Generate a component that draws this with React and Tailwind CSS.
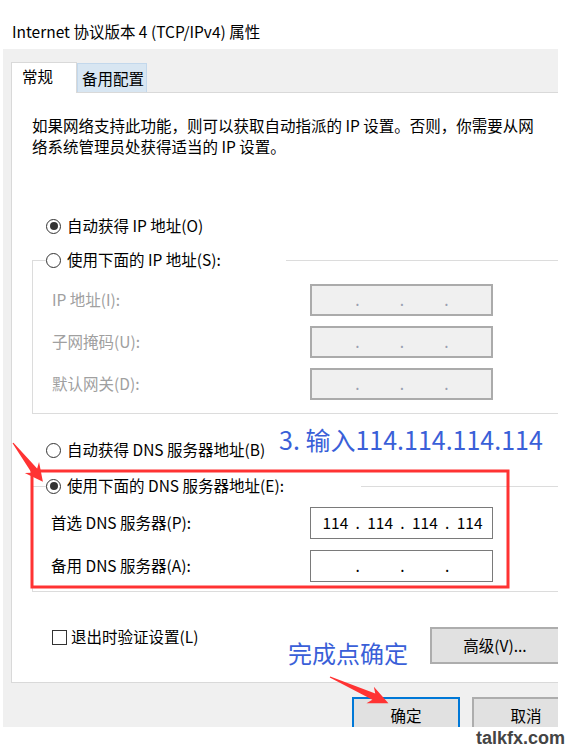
import React from 'react';

const Radio = ({ checked }) => (
  <span className="w-[15px] h-[15px] rounded-full border-[1.5px] border-[#333] bg-white flex items-center justify-center shrink-0">
    {checked && <span className="w-[8px] h-[8px] rounded-full bg-[#333]" />}
  </span>
);

// IP 输入框：四段，点落在段与段的边界上
const IpBox = ({ parts, disabled }) => (
  <div
    className={
      disabled
        ? 'w-[183px] h-[32px] border-2 border-[#ababab] bg-[#f0f0f0] flex items-center pl-[1px]'
        : 'w-[183px] h-[32px] border border-[#7a7a7a] bg-white flex items-center pl-[2px]'
    }
  >
    {[0, 1, 2, 3].map((i) => (
      <React.Fragment key={i}>
        {i > 0 && (
          <span className={'w-0 flex justify-center ' + (disabled ? 'text-[#9aa0b0]' : 'text-black')}>.</span>
        )}
        <span className="w-[45px] text-center">{parts ? parts[i] : ''}</span>
      </React.Fragment>
    ))}
  </div>
);

const Arrow = ({ x, y, len, angle, hl = 18, hw = 9, sw = 3.5 }) => {
  const pts = [
    [0, -0.6],
    [len - hl + 4, -sw],
    [len - hl, -hw],
    [len, 0],
    [len - hl, hw],
    [len - hl + 4, sw],
    [0, 0.6],
  ]
    .map((p) => p.join(','))
    .join(' ');
  return <polygon points={pts} fill="#f33" transform={`translate(${x},${y}) rotate(${angle})`} />;
};

function App() {
  return (
    <div className="relative w-[569px] h-[750px] bg-white text-black text-[15.5px] font-['Noto_Sans_CJK_SC','Noto_Sans',sans-serif] overflow-hidden">
      <div className="ml-[3px] w-[555px]">
        {/* 标题 */}
        <div className="h-[49px] pt-[20px] pl-[9px] leading-[22px] whitespace-nowrap">
          Internet 协议版本 4 (TCP/IPv4) 属性
        </div>

        <div className="h-[678px] bg-[#f0f0f0] overflow-hidden">
          {/* 选项卡 */}
          <div className="pt-[13px] pl-[8px]">
            <div className="h-[30px] flex items-start">
              <div className="relative z-10 w-[66px] h-[31px] bg-white border border-b-0 border-[#d9d9d9] pl-[10px] pt-[2px] leading-[22px]">
                常规
              </div>
              <div className="mt-[1px] w-[70px] h-[29px] bg-[#d8e6f2] border border-b-0 border-[#c3d8ec] pl-[4px] pt-[3px] leading-[22px]">
                备用配置
              </div>
            </div>

            <div className="w-[547px] h-[591px] bg-white border-l border-t border-b border-[#d9d9d9] flex flex-col">
              <p className="pl-[20px] pt-[22px] leading-[21px] whitespace-nowrap">
                如果网络支持此功能，则可以获取自动指派的 IP 设置。否则，你需要从网
                <br />
                络系统管理员处获得适当的 IP 设置。
              </p>

              <div className="mt-[58px] ml-[34px] h-[22px] flex items-center">
                <Radio checked />
                <span className="ml-[6px]">自动获得 IP 地址(O)</span>
              </div>

              {/* 使用下面的 IP 地址 */}
              <div className="mt-[23px] ml-[20px] border-l border-b border-[#dcdcdc] pb-[13px] flex flex-col">
                <div className="-mt-[11px] h-[22px] flex items-center">
                  <span className="w-[13px] h-px bg-[#dcdcdc]" />
                  <div className="w-[240px] flex items-center">
                    <Radio />
                    <span className="ml-[6px]">使用下面的 IP 地址(S):</span>
                  </div>
                  <span className="flex-1 h-px bg-[#dcdcdc]" />
                </div>
                <div className="mt-[13px] h-[32px] flex items-center">
                  <span className="w-[277px] pl-[19px] text-[#a0a0a0]">IP 地址(I):</span>
                  <IpBox disabled />
                </div>
                <div className="mt-[10px] h-[32px] flex items-center">
                  <span className="w-[277px] pl-[19px] text-[#a0a0a0]">子网掩码(U):</span>
                  <IpBox disabled />
                </div>
                <div className="mt-[10px] h-[32px] flex items-center">
                  <span className="w-[277px] pl-[19px] text-[#a0a0a0]">默认网关(D):</span>
                  <IpBox disabled />
                </div>
              </div>

              <div className="mt-[25px] ml-[34px] h-[22px] flex items-center">
                <Radio />
                <span className="ml-[6px]">自动获得 DNS 服务器地址(B)</span>
              </div>

              {/* 使用下面的 DNS 服务器地址 */}
              <div className="mt-[25px] ml-[20px] border-l border-b border-[#dcdcdc] pb-[9px] flex flex-col">
                <div className="-mt-[11px] h-[22px] flex items-center">
                  <span className="w-[13px] h-px bg-[#dcdcdc]" />
                  <div className="w-[315px] flex items-center">
                    <Radio checked />
                    <span className="ml-[6px]">使用下面的 DNS 服务器地址(E):</span>
                  </div>
                  <span className="flex-1 h-px bg-[#dcdcdc]" />
                </div>
                <div className="mt-[10px] h-[32px] flex items-center">
                  <span className="w-[277px] pl-[18px]">首选 DNS 服务器(P):</span>
                  <IpBox parts={['114', '114', '114', '114']} />
                </div>
                <div className="mt-[11px] h-[32px] flex items-center">
                  <span className="w-[277px] pl-[18px]">备用 DNS 服务器(A):</span>
                  <IpBox />
                </div>
              </div>

              <div className="mt-[34px] flex items-start">
                <div className="ml-[40px] h-[22px] flex items-center">
                  <span className="w-[15px] h-[15px] border-[1.5px] border-[#333] bg-white" />
                  <span className="ml-[4px]">退出时验证设置(L)</span>
                </div>
                <div className="ml-auto mt-[1px] w-[128px] h-[37px] border-2 border-r-0 border-[#adadad] bg-[#e1e1e1] flex items-center justify-center">
                  高级(V)...
                </div>
              </div>
            </div>
          </div>

          {/* 底部按钮 */}
          <div className="mt-[14px] pl-[349px] flex gap-[12px]">
            <div className="w-[108px] h-[37px] shrink-0 border-2 border-[#0078d7] bg-[#e1e1e1] flex items-center justify-center">
              确定
            </div>
            <div className="w-[108px] h-[37px] shrink-0 border-2 border-[#adadad] bg-[#e1e1e1] flex items-center justify-center">
              取消
            </div>
          </div>
        </div>
      </div>

      <div className="pr-[4px] text-right leading-[22px] text-[18px] font-bold text-[#444] font-['Liberation_Sans',sans-serif]">
        talkfx.com
      </div>

      {/* 标注 */}
      <div className="absolute left-[279px] top-[424px] leading-[30px] text-[25px] text-[#3a5fd8] whitespace-nowrap">
        3. 输入114.114.114.114
      </div>
      <div className="absolute left-[288px] top-[638px] leading-[30px] text-[24px] text-[#3a5fd8] whitespace-nowrap">
        完成点确定
      </div>
      <svg className="absolute left-0 top-0 pointer-events-none" width="569" height="750">
        <rect x="32" y="471" width="476" height="116" fill="none" stroke="#f33" strokeWidth="3" />
        <Arrow x={13} y={443} len={49} angle={52.4} />
        <Arrow x={330} y={677} len={64} angle={24.1} hl={20} />
      </svg>
    </div>
  );
}

export default App;
